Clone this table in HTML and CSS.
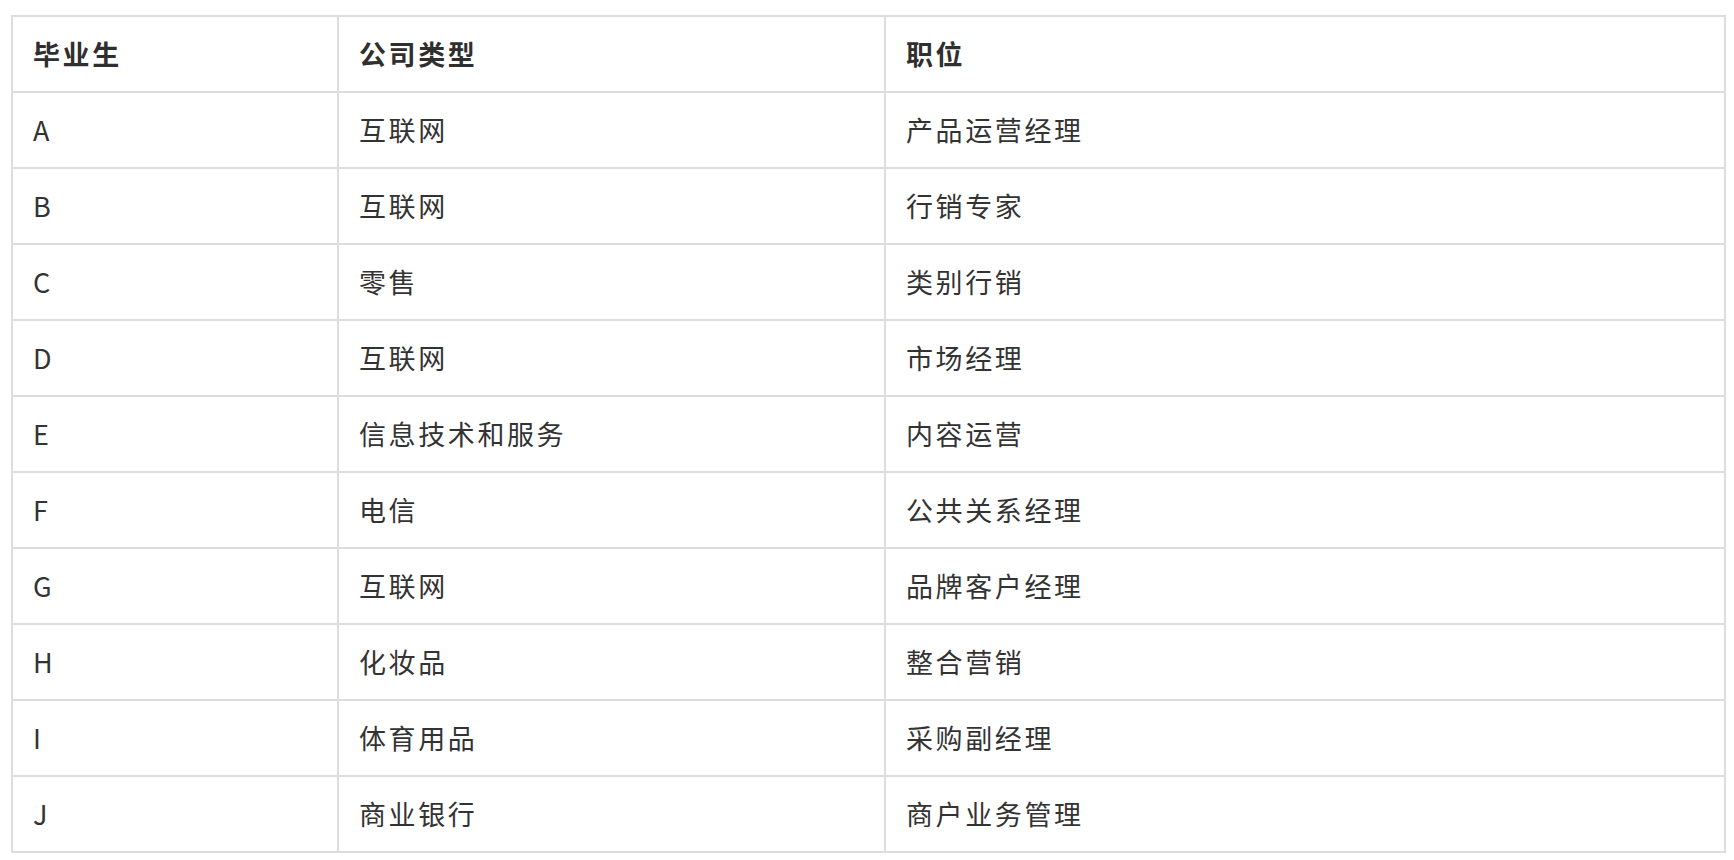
FILE: index.html
```html
<!DOCTYPE html>
<html lang="zh-CN">
<head>
<meta charset="utf-8">
<link rel="stylesheet" href="styles.css">
</head>
<body>
<table class="grad-table">
  <colgroup>
    <col class="c1"><col class="c2"><col class="c3">
  </colgroup>
  <thead>
    <tr><th>毕业生</th><th>公司类型</th><th>职位</th></tr>
  </thead>
  <tbody>
    <tr><td>A</td><td>互联网</td><td>产品运营经理</td></tr>
    <tr><td>B</td><td>互联网</td><td>行销专家</td></tr>
    <tr><td>C</td><td>零售</td><td>类别行销</td></tr>
    <tr><td>D</td><td>互联网</td><td>市场经理</td></tr>
    <tr><td>E</td><td>信息技术和服务</td><td>内容运营</td></tr>
    <tr><td>F</td><td>电信</td><td>公共关系经理</td></tr>
    <tr><td>G</td><td>互联网</td><td>品牌客户经理</td></tr>
    <tr><td>H</td><td>化妆品</td><td>整合营销</td></tr>
    <tr><td>I</td><td>体育用品</td><td>采购副经理</td></tr>
    <tr><td>J</td><td>商业银行</td><td>商户业务管理</td></tr>
  </tbody>
</table>
</body>
</html>
```
FILE: styles.css
```css
html, body {
  margin: 0;
  padding: 0;
  background: #ffffff;
}
body {
  padding: 15px 0 0 11px;
  font-family: "Noto Sans CJK SC", "Noto Sans", sans-serif;
  color: #333333;
}
.grad-table {
  border-collapse: collapse;
  table-layout: fixed;
  width: 1713px;
}
.c1 { width: 326px; }
.c2 { width: 547px; }
.c3 { width: 840px; }
.grad-table th,
.grad-table td {
  border: 2px solid #dddddd;
  padding: 19px 20px;
  height: 36px;
  line-height: 36px;
  font-size: 27px;
  letter-spacing: 2.6px;
  text-align: left;
  vertical-align: middle;
  white-space: nowrap;
}
.grad-table th {
  font-weight: 700;
  color: #2f2f2f;
}
.grad-table td {
  font-weight: 400;
}
```
